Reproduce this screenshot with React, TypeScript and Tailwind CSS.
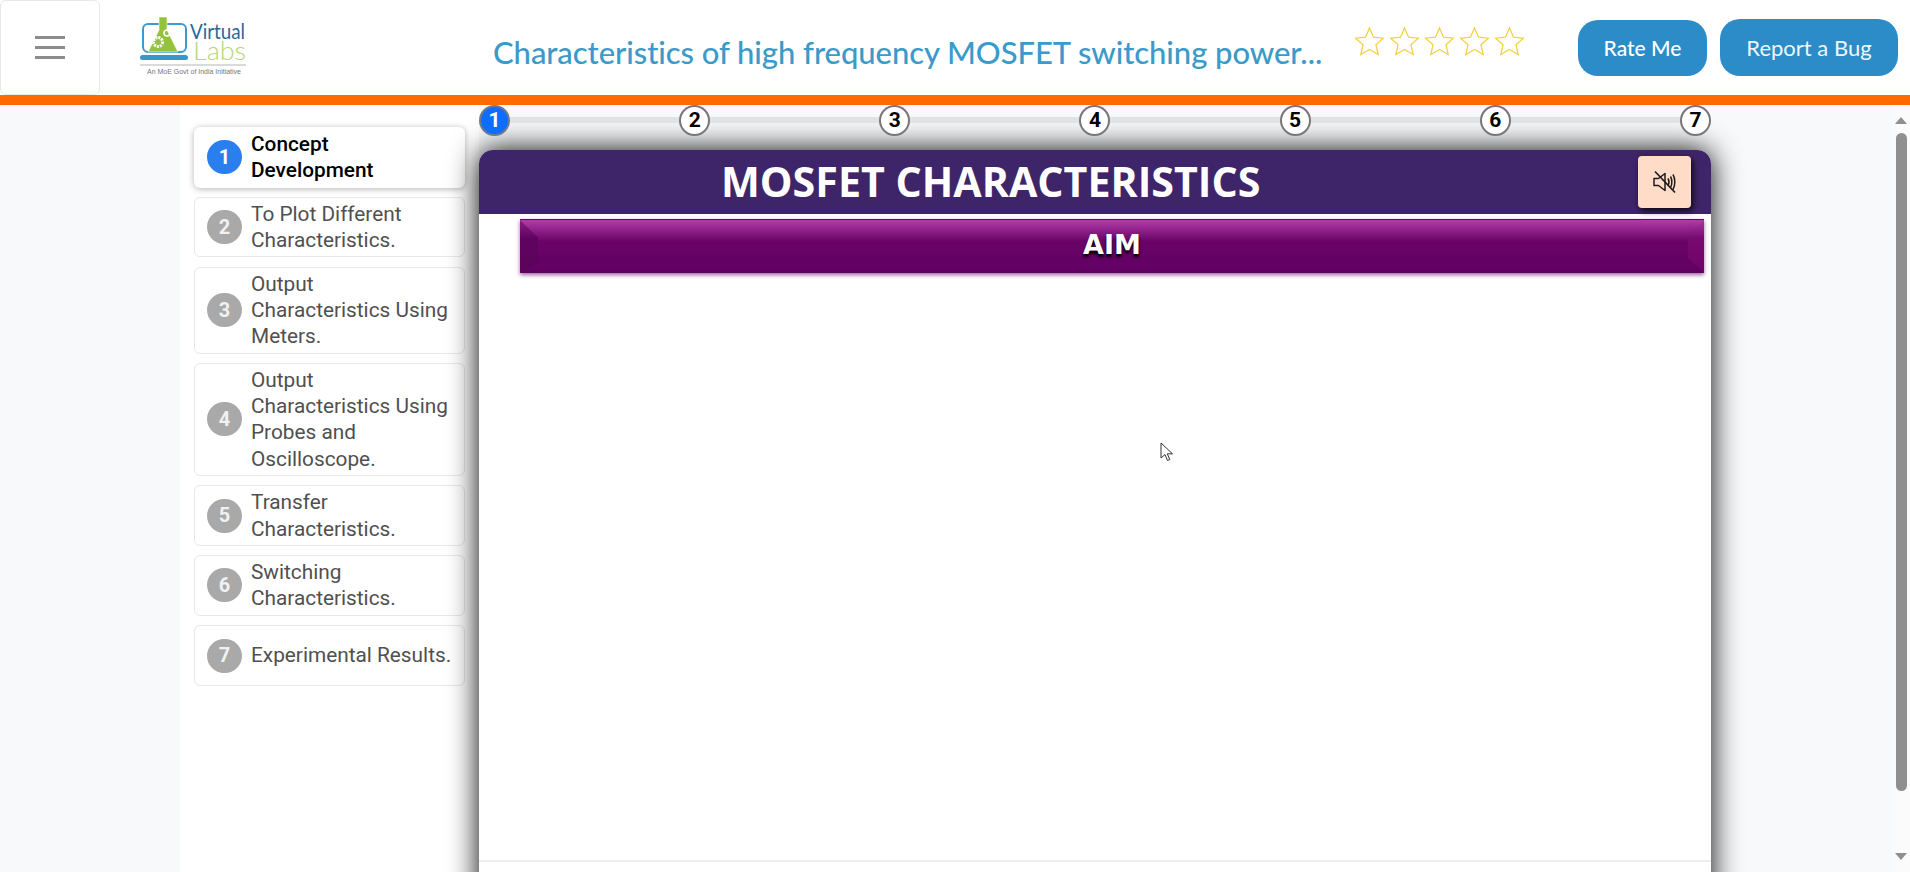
const lessons = [
  { n: 1, lines: ["Concept", "Development"], active: true },
  { n: 2, lines: ["To Plot Different", "Characteristics."] },
  { n: 3, lines: ["Output", "Characteristics Using", "Meters."] },
  { n: 4, lines: ["Output", "Characteristics Using", "Probes and", "Oscilloscope."] },
  { n: 5, lines: ["Transfer", "Characteristics."] },
  { n: 6, lines: ["Switching", "Characteristics."] },
  { n: 7, lines: ["Experimental Results."], tall: true },
];

function Star() {
  return (
    <svg width="31" height="31" viewBox="0 0 24 24" fill="none" stroke="#f5d142" strokeWidth="1">
      <path d="M12 1.5l3.1 7.2 7.6.7-5.7 5.1 1.7 7.6L12 18.1l-6.7 4 1.7-7.6L1.3 9.4l7.6-.7z" />
    </svg>
  );
}

function MuteIcon() {
  return (
    <svg width="26" height="26" viewBox="0 0 26 26" fill="none" stroke="#1c1c1c" strokeWidth="1.5">
      <path d="M2 9.5h4.5L13 4.5v17l-6.5-5H2z" strokeLinejoin="round" />
      <path d="M16 9.5c1.2 2 1.2 5 0 7" />
      <path d="M18.5 7.5c1.8 3 1.8 8 0 11" />
      <path d="M21 5.5c2.4 4 2.4 11 0 15" />
      <path d="M3 2.5l20 21" strokeWidth="1.7" />
    </svg>
  );
}

function Logo() {
  return (
    <svg width="110" height="62" viewBox="0 0 110 62" className="shrink-0 overflow-visible">
      <rect x="3" y="7" width="43" height="28" rx="5" fill="none" stroke="#3b9bd0" strokeWidth="2" />
      <rect x="0" y="38" width="48" height="5" rx="2.5" fill="#3797cb" />
      <path d="M19 0h8v13l11 22H8l11-22z" fill="#95c23d" stroke="#fff" strokeWidth="0.6" />
      <circle cx="18" cy="25" r="4.5" fill="none" stroke="#fff" strokeWidth="3" strokeDasharray="2 1" />
      <circle cx="27" cy="16" r="3" fill="none" stroke="#fff" strokeWidth="1.6" />
      <text x="50" y="22" fontFamily="Lato, sans-serif" fontSize="21" textLength="55" lengthAdjust="spacingAndGlyphs" fill="#1f6a99">Virtual</text>
      <text x="53" y="43" fontFamily="Lato, sans-serif" fontSize="26" fontWeight="300" textLength="53" lengthAdjust="spacingAndGlyphs" fill="#b4d67c">Labs</text>
      <line x1="0" y1="48" x2="106" y2="48" stroke="#b5b5b5" />
      <text x="7" y="57" fontFamily="'Liberation Sans', sans-serif" fontSize="6.4" textLength="94" lengthAdjust="spacingAndGlyphs" fill="#777">An MoE Govt of India Initiative</text>
    </svg>
  );
}

export default function App() {
  return (
    <div className="relative h-[872px] overflow-hidden bg-[#f8f9fb] font-['Roboto',sans-serif]">
      <header className="flex h-[95px] items-center bg-white">
        <button className="flex h-[95px] w-[100px] shrink-0 flex-col items-center justify-center gap-[7px] rounded-md border border-[#e8e8e8]">
          <span className="h-[3px] w-[30px] bg-[#8c8c8c]" />
          <span className="h-[3px] w-[30px] bg-[#8c8c8c]" />
          <span className="h-[3px] w-[30px] bg-[#8c8c8c]" />
        </button>
        <div className="ml-[40px] mt-[1px]">
          <Logo />
        </div>
        <h1 className="ml-[243px] mt-[10px] w-[845px] shrink-0 font-['Lato',sans-serif] text-[31px] font-medium tracking-[-0.06px] whitespace-nowrap text-[#3a9ac9]">
          Characteristics of high frequency MOSFET switching power...
        </h1>
        <div className="ml-[16px] mb-[13px] flex gap-[4px]">
          {[1, 2, 3, 4, 5].map((s) => (
            <Star key={s} />
          ))}
        </div>
        <button className="ml-[53px] h-[56px] w-[129px] rounded-[20px] bg-[#2b8cc8] font-['Lato',sans-serif] text-[21px] font-medium text-white">
          Rate Me
        </button>
        <button className="ml-[13px] h-[57px] w-[178px] rounded-[20px] bg-[#2b8cc8] font-['Lato',sans-serif] text-[22px] text-[#eef7fc]">
          Report a Bug
        </button>
      </header>
      <div className="h-[10px] bg-[#ff6a00]" />

      <div className="flex h-[767px]">
        <div className="w-[180px] shrink-0" />

        <aside className="flex w-[299px] shrink-0 flex-col gap-[9.4px] bg-white pt-[22px] pl-[14px] pr-[14px]">
          {lessons.map((l) => (
            <div
              key={l.n}
              className={
                l.active
                  ? "flex h-[60.5px] items-center gap-[9px] rounded-md bg-white pl-[13px] text-[20.8px] leading-[26.25px] font-medium text-black shadow-[0_1px_6px_rgba(0,0,0,0.3)]"
                  : "flex items-center gap-[9px] rounded-md border border-[#e8e8e8] bg-white py-[3px] pl-[12px] text-[20.8px] leading-[26.25px] text-[#505050]" +
                    (l.tall ? " h-[61px]" : "")
              }
            >
              <span
                className={
                  l.active
                    ? "flex h-[34px] w-[35px] shrink-0 items-center justify-center rounded-full bg-[#2a7fee] text-[20px] font-bold text-white"
                    : "flex h-[34px] w-[35px] shrink-0 items-center justify-center rounded-full bg-[#a9a9a9] text-[20px] font-bold text-[#f1f1f1]"
                }
              >
                {l.n}
              </span>
              <span>
                {l.lines.map((t) => (
                  <span key={t} className="block whitespace-nowrap">
                    {t}
                  </span>
                ))}
              </span>
            </div>
          ))}
        </aside>

        <main className="w-[1232px] shrink-0">
          <div className="relative flex h-[45px] items-start justify-between">
            <div className="absolute top-[12px] right-[16px] left-[16px] h-[6px] bg-[#e2e2e2]" />
            {[1, 2, 3, 4, 5, 6, 7].map((n) => (
              <span
                key={n}
                className={
                  n === 1
                    ? "relative flex h-[31px] w-[31px] items-center justify-center rounded-full border-2 border-[#6e7a8a] bg-[#0d6efd] text-[21px] font-bold text-white"
                    : "relative flex h-[31px] w-[31px] items-center justify-center rounded-full border-2 border-[#777] bg-white text-[21px] font-bold text-black"
                }
              >
                {n}
              </span>
            ))}
          </div>

          <section className="h-[800px] rounded-t-[14px] bg-white shadow-[0_0_30px_rgba(0,0,0,1)]">
            <div className="relative flex h-[64px] items-center rounded-t-[14px] bg-[#3e2569] pl-[242px]">
              <h2 className="font-['Open_Sans',sans-serif] text-[41.2px] font-bold text-white">MOSFET CHARACTERISTICS</h2>
              <button className="absolute top-[6px] right-[20px] flex h-[52px] w-[53px] items-center justify-center rounded-[4px] bg-[#ffdcc8] shadow-[2px_3px_6px_rgba(0,0,0,0.8)]">
                <MuteIcon />
              </button>
            </div>
            <div className="relative ml-[41px] mr-[7px] mt-[5px] flex h-[54px] items-center justify-center border-t border-[#5c0a5c] bg-[linear-gradient(#b23ca8,#6a0368_40%,#610063)] shadow-[0_2px_4px_rgba(90,0,90,0.6)]">
              <div className="absolute inset-y-0 left-0 w-[18px] bg-[linear-gradient(#8a1f85,#5f0360_35%,#5a0359)] [clip-path:polygon(0_0,100%_33%,100%_80%,0_100%)]" />
              <div className="absolute inset-y-0 right-0 w-[16px] bg-[linear-gradient(#a8379f,#760a70_35%,#6d0368)] [clip-path:polygon(100%_0,0_30%,0_72%,100%_100%)]" />
              <span className="mb-[2px] font-['DejaVu_Sans',sans-serif] text-[27px] font-bold text-white [text-shadow:0_3px_3px_#000]">AIM</span>
            </div>
            <div className="mt-[587px] h-[2px] bg-[#eeeeee]" />
          </section>
        </main>

        <div className="ml-auto flex w-[18px] shrink-0 flex-col items-center bg-[#fbfbfb]">
          <span className="mt-[12px] h-0 w-0 border-x-[6px] border-b-[7px] border-x-transparent border-b-[#8f8f8f]" />
          <span className="mt-[9px] h-[658px] w-[11px] rounded-full bg-[#8f8f8f]" />
          <span className="mt-[62px] h-0 w-0 border-x-[6px] border-t-[7px] border-x-transparent border-t-[#8f8f8f]" />
        </div>
      </div>

      <svg width="14" height="20" viewBox="0 0 14 20" className="absolute top-[442px] left-[1160px]">
        <path d="M1 1v15l4-3.5 2.5 6 2.3-1-2.5-5.7H12.5z" fill="#fff" stroke="#333" strokeWidth="1" />
      </svg>
    </div>
  );
}
